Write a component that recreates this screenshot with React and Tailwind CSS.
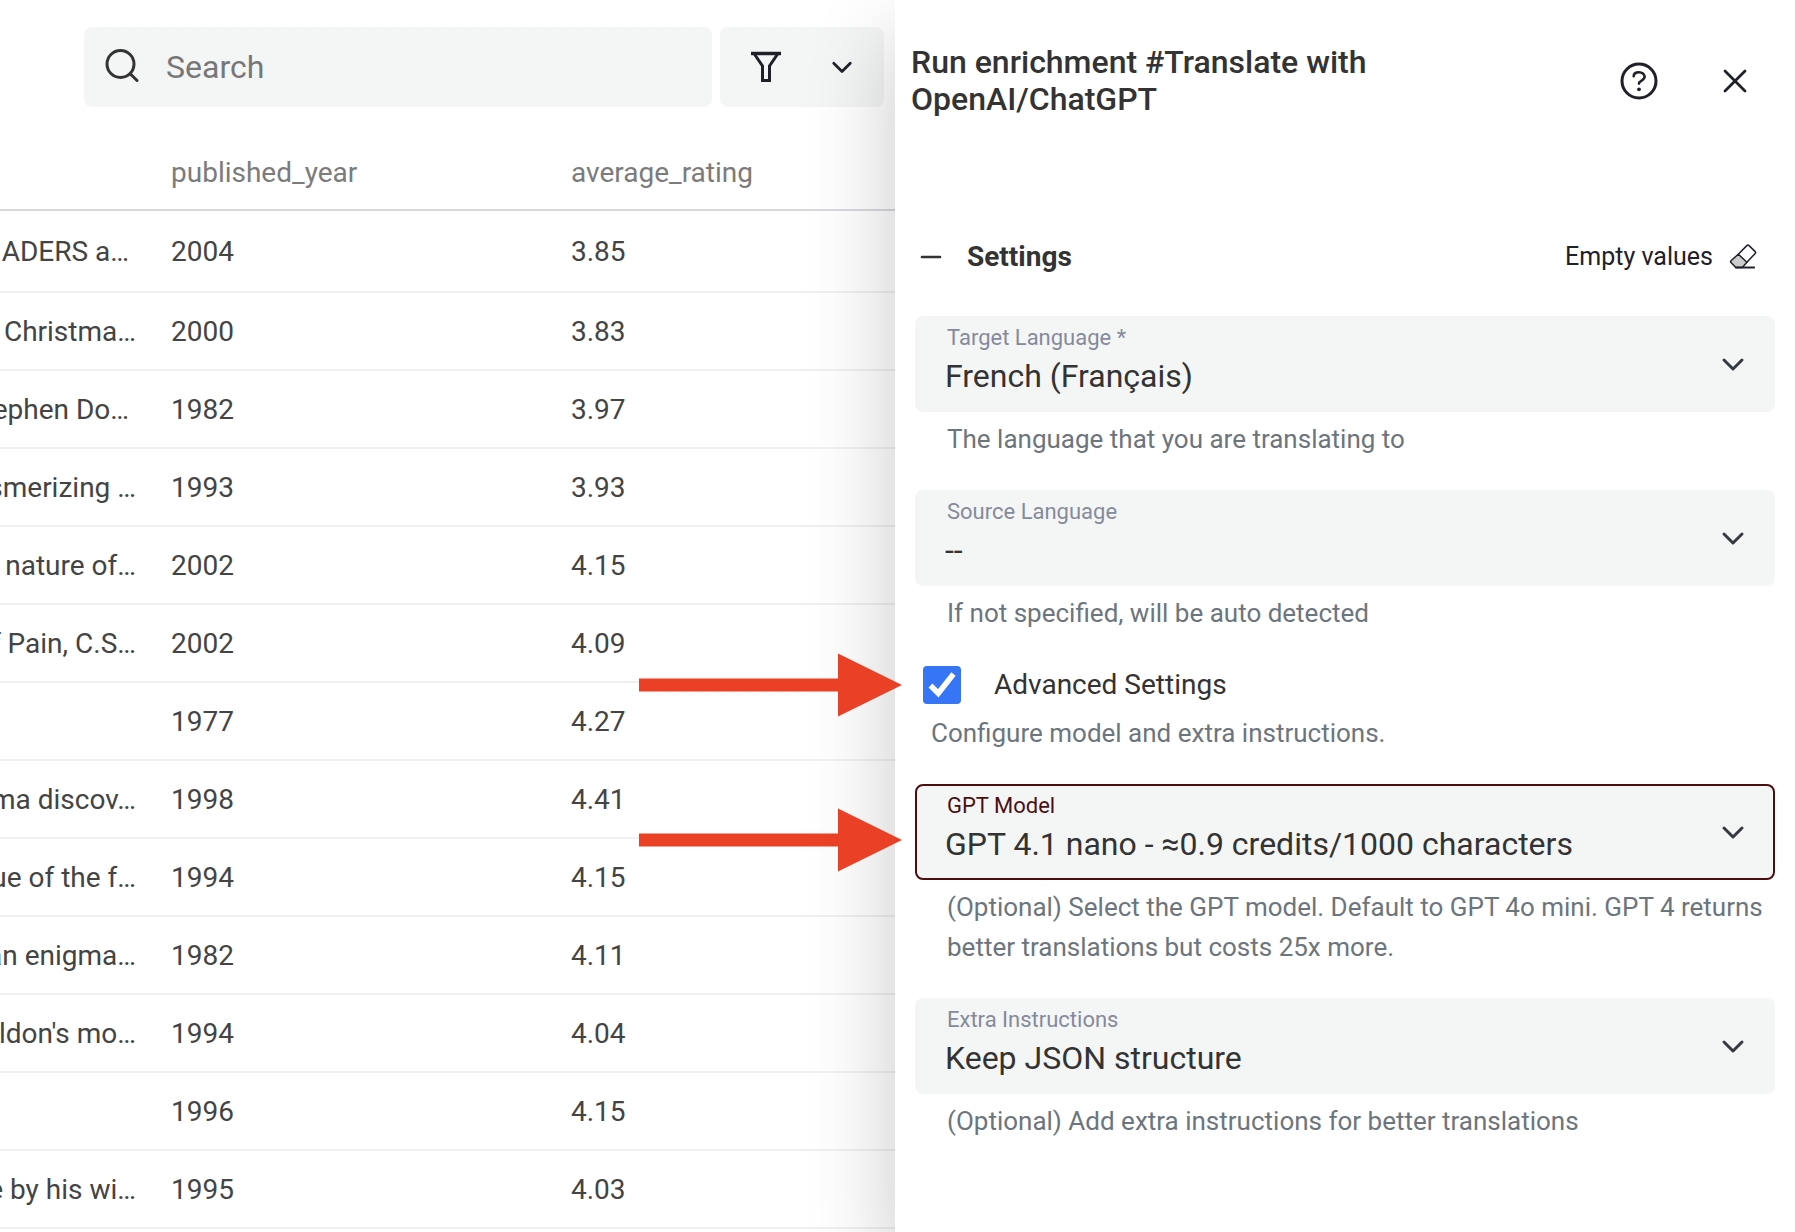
import { useState } from "react"

const BOOKS = [
  { excerpt: "ADERS a… ", year: 2004, rating: "3.85" },
  { excerpt: "Christma…", year: 2000, rating: "3.83" },
  { excerpt: "ephen Do… ", year: 1982, rating: "3.97" },
  { excerpt: "smerizing …", year: 1993, rating: "3.93" },
  { excerpt: "nature of…", year: 2002, rating: "4.15" },
  { excerpt: "f Pain, C.S…", year: 2002, rating: "4.09" },
  { excerpt: "", year: 1977, rating: "4.27" },
  { excerpt: "ma discov…", year: 1998, rating: "4.41" },
  { excerpt: "ue of the f…", year: 1994, rating: "4.15" },
  { excerpt: "an enigma…", year: 1982, rating: "4.11" },
  { excerpt: "ldon's mo…", year: 1994, rating: "4.04" },
  { excerpt: "", year: 1996, rating: "4.15" },
  { excerpt: "e by his wi…", year: 1995, rating: "4.03" },
]

const SearchIcon = () => (
  <svg className="h-9 w-[34px] shrink-0" viewBox="0 0 34 36" fill="none" stroke="#333" strokeWidth="3" strokeLinecap="round">
    <circle cx="15.5" cy="15" r="13.5" />
    <path d="M25.5 25l6.5 6.5" />
  </svg>
)

const FunnelIcon = () => (
  <svg className="h-8 w-8" viewBox="0 0 32 32" fill="none" stroke="#1f2028" strokeWidth="3">
    <path d="M1 2.5h30" strokeWidth="3.5" />
    <path d="M4 2.5l8.5 12.5v14.5h7V15L28 2.5" />
  </svg>
)

const ChevronIcon = ({ className }) => (
  <svg className={className} viewBox="0 0 24 24" fill="none" stroke="currentColor" strokeWidth="3" strokeLinecap="round" strokeLinejoin="round">
    <path d="M3 8l9 9 9-9" />
  </svg>
)

const HelpIcon = () => (
  <svg className="h-10 w-10" viewBox="-20 -20 40 40" fill="none" stroke="#1f2028" strokeWidth="3" strokeLinecap="round">
    <circle r="17" />
    <path d="M-5.3 -4.8C-5.3 -7.5 -3 -8.8 0 -8.8S5.6 -7 5.6 -4.2C5.6 -0.4 0 -0.6 0 2.6" strokeWidth="2.6" />
    <circle cy="8.3" r="1.9" fill="#1f2028" stroke="none" />
  </svg>
)

const CloseIcon = () => (
  <svg className="h-6 w-6" viewBox="0 0 24 24" fill="none" stroke="#1f2028" strokeWidth="2.8" strokeLinecap="round">
    <path d="M2 2l20 20M22 2L2 22" />
  </svg>
)

const EraserIcon = () => (
  <svg className="h-7 w-7" viewBox="0 0 28 28" fill="none" stroke="#1f2028" strokeWidth="1.5" strokeLinejoin="round" strokeLinecap="round">
    <path d="M9.3 11.2l8.6 8-4.6 5.3H6.8L2 19.6c-.6-.6-.6-1.2 0-1.8z" fill="#ccc" />
    <path d="M9.3 11.2L18 2.4c.6-.6 1.2-.6 1.8 0l6.4 6.2c.6.6.6 1.2 0 1.8l-8.3 8.8" />
    <path d="M6.8 24.5h18.4" strokeWidth="1.8" />
  </svg>
)

const Arrow = ({ className }) => (
  <svg className={`pointer-events-none absolute h-16 w-[263px] ${className}`} viewBox="0 0 263 64" fill="#ea4126">
    <path d="M0 25.5h199V.5L263 32l-64 31.5v-25H0z" />
  </svg>
)

const HelperText = ({ children }) => <p className="text-[26px] leading-10 text-[#6c757d]">{children}</p>

const SelectField = ({ id, label, value, helper, active, children }) => (
  <div>
    <div
      className={`relative h-24 rounded-lg border-2 bg-[#f4f6f6] pt-1.5 ${
        active ? "border-[#4b0f12]" : "border-transparent"
      }`}
    >
      <label
        htmlFor={id}
        className={`block px-[30px] text-[22px] leading-7 ${active ? "text-[#4b0f12]" : "text-[#858a9c]"}`}
      >
        {label}
      </label>
      <select
        id={id}
        defaultValue={value}
        className="block h-12 w-full appearance-none bg-transparent px-[28px] text-[32px] text-[#333] outline-none"
      >
        <option>{value}</option>
      </select>
      <ChevronIcon className="pointer-events-none absolute top-1/2 right-7 h-6 w-6 -translate-y-1/2 text-[#343a40]" />
      {children}
    </div>
    <div className="mt-[7px] pl-8">
      <HelperText>{helper}</HelperText>
    </div>
  </div>
)

const BookTable = () => (
  <table className="mt-7 w-full table-fixed border-separate border-spacing-0 text-left text-[28px]">
    <thead>
      <tr className="text-[#7b7b7b]">
        <th className="h-[76px] w-[155px] border-b-2 border-[#d8d8de]" />
        <th className="w-[400px] border-b-2 border-[#d8d8de] pt-0.5 pl-4 font-normal">published_year</th>
        <th className="border-b-2 border-[#d8d8de] pt-0.5 pl-4 font-normal">average_rating</th>
      </tr>
    </thead>
    <tbody>
      {BOOKS.map((book, index) => (
        <tr key={index} className={`text-[#444] ${index === 0 ? "h-[82px]" : "h-[78px]"}`}>
          <td className="border-b-2 border-[#f0f0f1] pt-0.5 pr-[19px]">
            <div className="flex justify-end overflow-hidden whitespace-pre">
              <span className="shrink-0">{book.excerpt}</span>
            </div>
          </td>
          <td className="border-b-2 border-[#f0f0f1] pt-0.5 pl-4">{book.year}</td>
          <td className="border-b-2 border-[#f0f0f1] pt-0.5 pl-4">{book.rating}</td>
        </tr>
      ))}
    </tbody>
  </table>
)

const EnrichmentPanel = () => {
  const [advanced, setAdvanced] = useState(true)

  return (
    <aside className="relative w-[900px] max-w-full shrink-0 bg-white pt-11 pr-5 pl-5 shadow-[0_40px_80px_4px_rgba(0,0,0,0.2)]">
      <header className="-ml-1 flex items-center pr-6">
        <h2 className="mr-16 flex-1 text-[32px] leading-[37px] font-medium text-[#333]">
          Run enrichment #Translate with OpenAI/ChatGPT
        </h2>
        <button type="button" aria-label="Help" className="mr-[60px]">
          <HelpIcon />
        </button>
        <button type="button" aria-label="Close" className="p-1">
          <CloseIcon />
        </button>
      </header>

      <div className="mt-[119px] mb-[39px] flex h-10 items-center justify-between pr-[18px] pl-1">
        <button type="button" className="flex items-center gap-6 text-[28px] font-bold text-[#333]">
          <svg className="h-6 w-6" viewBox="0 0 24 24" stroke="#333" strokeWidth="2.6" strokeLinecap="round">
            <path d="M3 12h18" />
          </svg>
          Settings
        </button>
        <button type="button" className="flex items-center gap-4 text-[25px] text-[#1f2028]">
          Empty values
          <EraserIcon />
        </button>
      </div>

      <form className="flex flex-col gap-[31px]">
        <SelectField
          id="target"
          label="Target Language *"
          value="French (Français)"
          helper="The language that you are translating to"
        />
        <SelectField
          id="source"
          label="Source Language"
          value="--"
          helper="If not specified, will be auto detected"
        />
        <div className="relative pt-0.5">
          <label className="flex items-center pl-2 text-[28px] leading-[38px] text-[#333]">
            <span className="mr-[33px] grid">
              <input
                type="checkbox"
                checked={advanced}
                onChange={(e) => setAdvanced(e.target.checked)}
                className="col-start-1 row-start-1 h-[38px] w-[38px] appearance-none rounded-sm border-2 border-[#3575f6] checked:bg-[#3575f6]"
              />
              {advanced && (
                <svg className="pointer-events-none col-start-1 row-start-1 h-[38px] w-[38px]" viewBox="0 0 38 38" fill="none" stroke="#fff" strokeWidth="5.5">
                  <path d="M7.5 19.5l7.8 7.8L30.5 8" />
                </svg>
              )}
            </span>
            Advanced Settings
          </label>
          <Arrow className="-top-[11px] right-full mr-[13px]" />
          <div className="mt-[9px] pl-4">
            <HelperText>Configure model and extra instructions.</HelperText>
          </div>
        </div>
        <SelectField
          id="model"
          label="GPT Model"
          value="GPT 4.1 nano - ≈0.9 credits/1000 characters"
          helper="(Optional) Select the GPT model. Default to GPT 4o mini. GPT 4 returns better translations but costs 25x more."
          active
        >
          <Arrow className="top-[22px] right-full mr-[15px]" />
        </SelectField>
        <SelectField
          id="extra"
          label="Extra Instructions"
          value="Keep JSON structure"
          helper="(Optional) Add extra instructions for better translations"
        />
      </form>
    </aside>
  )
}

export default function App() {
  return (
    <div className="flex min-h-screen overflow-hidden bg-white font-[Roboto,sans-serif]">
      <main className="min-w-0 flex-1 pt-[27px]">
        <div className="flex gap-2 pr-[11px] pl-[84px]">
          <label className="flex h-20 flex-1 items-center gap-[27px] rounded-lg bg-[#f4f6f6] px-[21px]">
            <SearchIcon />
            <input
              type="search"
              aria-label="Search"
              placeholder="Search"
              className="w-full min-w-0 bg-transparent text-[32px] outline-none placeholder:text-[#777]"
            />
          </label>
          <button
            type="button"
            aria-label="Filter"
            className="flex h-20 w-[164px] items-center justify-between rounded-lg bg-[#f4f6f6] pr-[31px] pl-[30px] text-[#1f2028]"
          >
            <FunnelIcon />
            <ChevronIcon className="h-[22px] w-[22px]" />
          </button>
        </div>
        <BookTable />
      </main>
      <EnrichmentPanel />
    </div>
  )
}
